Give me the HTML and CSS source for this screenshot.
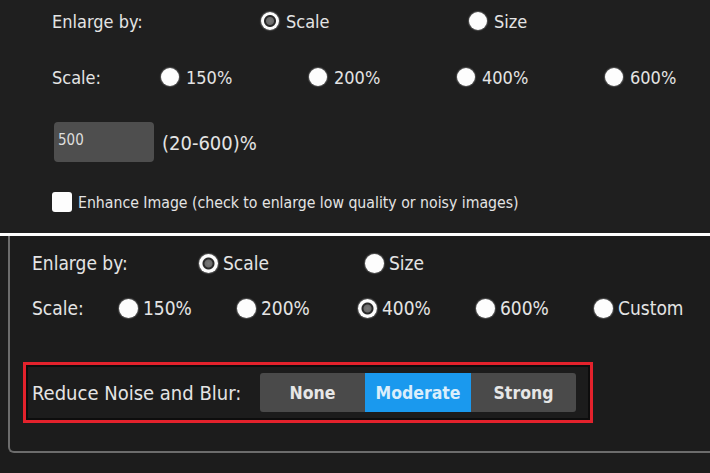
FILE: index.html
```
<!DOCTYPE html>
<html>
<head>
<meta charset="utf-8">
<link rel="stylesheet" href="styles.css">
</head>
<body>
<div class="top">
  <div class="row r1">
    <span class="label l1">Enlarge by:</span>
    <span class="opt o1"><span class="radio on"></span>Scale</span>
    <span class="opt o1"><span class="radio"></span>Size</span>
  </div>
  <div class="row r2">
    <span class="label l2">Scale:</span>
    <span class="opt o2"><span class="radio"></span>150%</span>
    <span class="opt o2"><span class="radio"></span>200%</span>
    <span class="opt o2"><span class="radio"></span>400%</span>
    <span class="opt o2"><span class="radio"></span>600%</span>
  </div>
  <div class="row r3">
    <span class="field">500</span>
    <span class="range">(20-600)%</span>
  </div>
  <div class="row r4">
    <span class="check"></span>
    <span class="enh">Enhance Image (check to enlarge low quality or noisy images)</span>
  </div>
</div>
<div class="divider"></div>
<div class="bottom">
  <div class="panel">
    <div class="row b1">
      <span class="label bl1">Enlarge by:</span>
      <span class="opt bo1"><span class="radio big on"></span>Scale</span>
      <span class="opt bo1"><span class="radio big"></span>Size</span>
    </div>
    <div class="row b2">
      <span class="label bl2">Scale:</span>
      <span class="opt bo2"><span class="radio big"></span>150%</span>
      <span class="opt bo2 w121"><span class="radio big"></span>200%</span>
      <span class="opt bo2"><span class="radio big on"></span>400%</span>
      <span class="opt bo2"><span class="radio big"></span>600%</span>
      <span class="opt bo2"><span class="radio big"></span>Custom</span>
    </div>
    <div class="redbox">
      <span class="label nl">Reduce Noise and Blur:</span>
      <div class="seg">
        <span class="btn">None</span>
        <span class="btn active">Moderate</span>
        <span class="btn">Strong</span>
      </div>
    </div>
  </div>
</div>
</body>
</html>
```
FILE: styles.css
```
html, body {
  margin: 0;
  padding: 0;
  background: #1d1d1d;
}
body {
  width: 710px;
  height: 473px;
  overflow: hidden;
  font-family: "DejaVu Sans Condensed", "DejaVu Sans", sans-serif;
  font-stretch: condensed;
  color: #e4e4e4;
}
.top {
  height: 233px;
  box-sizing: border-box;
  padding-left: 52px;
  background: #1f1f1f;
  font-size: 18px;
}
.row {
  display: flex;
  align-items: center;
}
.row > * {
  flex: none;
}
.row > .opt:last-child {
  width: auto;
}
.r1 { height: 42px; }
.r2 { height: 42px; margin-top: 14px; }
.r3 { height: 40px; margin-top: 24px; }
.r4 { height: 20px; margin-top: 30px; }
.l1 { width: 209px; }
.l2 { width: 109px; }
.opt {
  display: flex;
  align-items: center;
  white-space: nowrap;
}
.o1 { width: 208px; }
.o2 { width: 148px; }
.radio {
  width: 18px;
  height: 18px;
  border-radius: 50%;
  background: #fdfdfd;
  box-shadow: 0 0 1px 1px rgba(120,120,120,0.6);
  margin-right: 7px;
  flex: none;
}
.radio.on {
  background: radial-gradient(circle, #7a7a7a 0, #6a6a6a 3.5px, #2a2a2a 4.5px, #2a2a2a 5.5px, #fdfdfd 6.5px);
}
.radio.big {
  width: 19px;
  height: 19px;
  margin-right: 5px;
}
.field {
  width: 100px;
  height: 40px;
  box-sizing: border-box;
  margin-left: 2px;
  padding: 9px 0 0 4px;
  align-self: flex-start;
  background: #4e4e4e;
  border-radius: 4px;
  font-size: 15px;
  color: #dedede;
}
.range {
  margin-left: 8px;
  font-size: 20px;
  padding-top: 2px;
}
.check {
  width: 20px;
  height: 20px;
  background: #fdfdfd;
  border-radius: 3px;
  margin-right: 6px;
}
.enh {
  font-size: 15.7px;
}
.divider {
  height: 3px;
  background: #ffffff;
}
.bottom {
  height: 237px;
  background: #1c1c1c;
}
.panel {
  margin-left: 8px;
  height: 217px;
  box-sizing: border-box;
  border-left: 2px solid #6c6c6c;
  border-bottom: 2px solid #6c6c6c;
  border-bottom-left-radius: 6px;
  padding: 8px 0 0 22px;
  font-size: 19px;
}
.b1 { height: 38px; }
.b2 { height: 38px; margin-top: 7px; }
.bl1 { width: 167px; }
.bl2 { width: 87px; }
.bo1 { width: 166px; }
.bo2 { width: 118px; }
.w121 { width: 121px; }
.redbox {
  margin: 35px 0 0 -9px;
  width: 570px;
  height: 61px;
  box-sizing: border-box;
  border: 3px solid #e3222c;
  box-shadow: inset 0 0 0 2px #0d0d0d;
  display: flex;
  align-items: center;
  padding-left: 6px;
}
.redbox > * {
  flex: none;
}
.nl {
  width: 228px;
  font-size: 20px;
}
.seg {
  display: flex;
  height: 39px;
  background: #4a4a4a;
  border-radius: 3px;
  overflow: hidden;
}
.btn {
  width: 105px;
  display: flex;
  align-items: center;
  justify-content: center;
  font-weight: bold;
  font-size: 17.5px;
  color: #e6e6e6;
}
.btn.active {
  width: 106px;
  background: #1a99ee;
  color: #dbeefb;
}
```
